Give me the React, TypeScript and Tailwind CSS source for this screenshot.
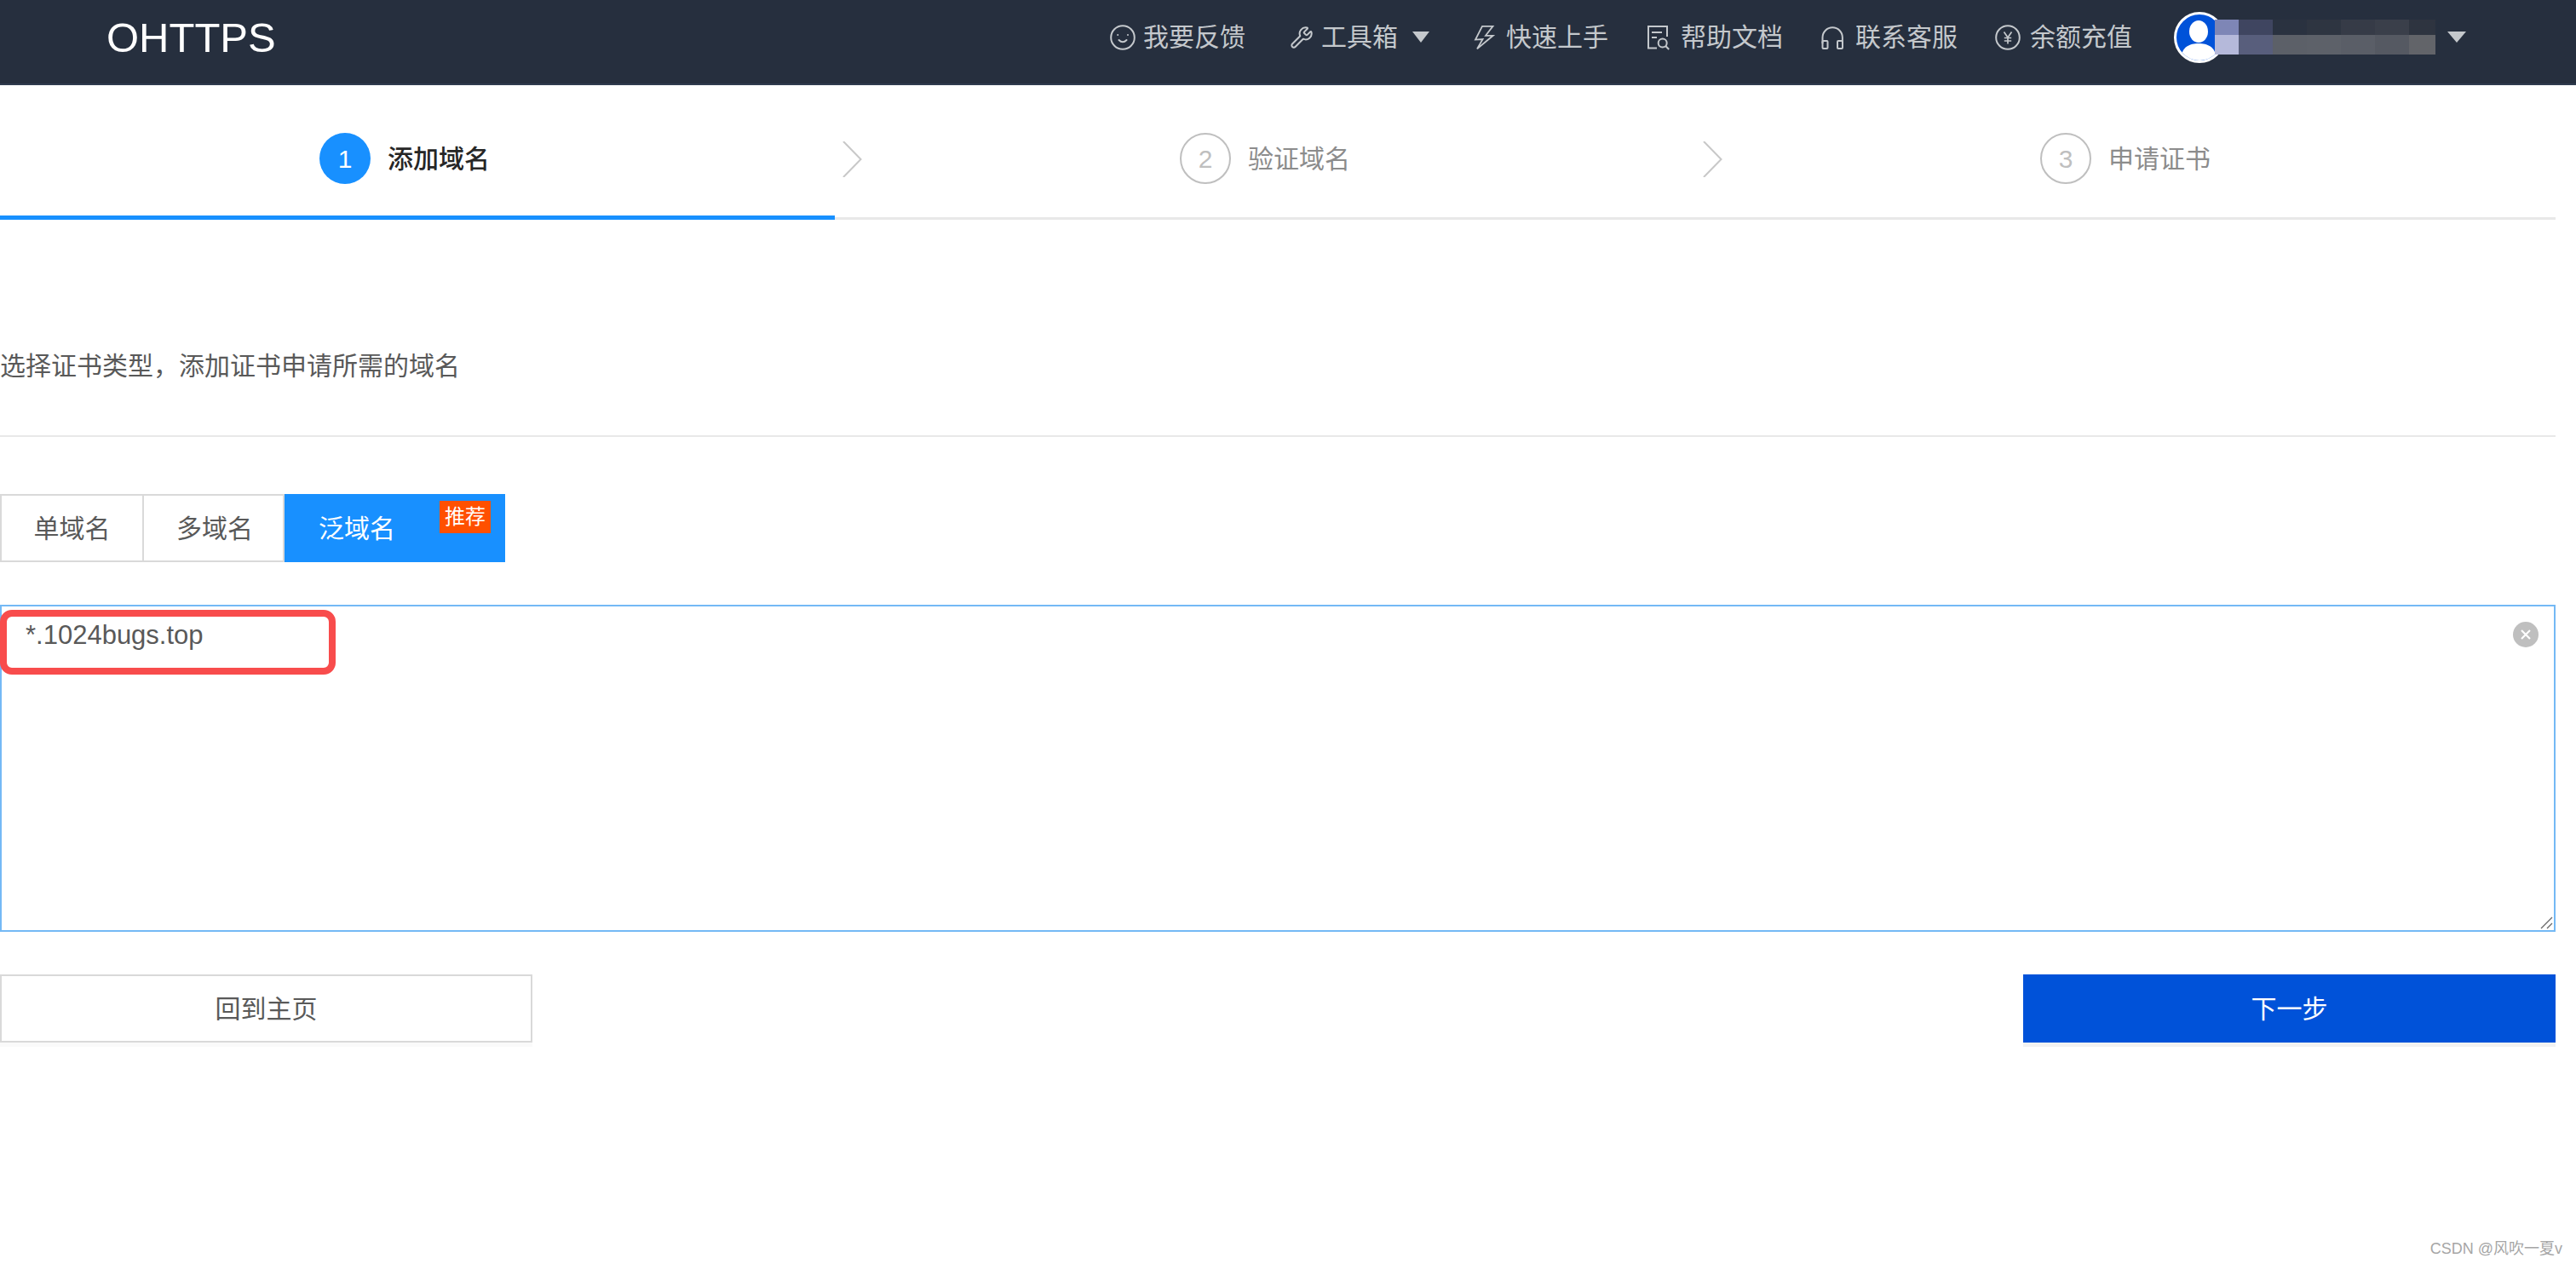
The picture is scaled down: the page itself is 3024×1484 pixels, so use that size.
import React from "react";
import { Wrench } from "lucide-react";

const ICON = "#c4c8cc";

function Smile() {
  return (
    <svg width="30" height="30" viewBox="0 0 30 30" fill="none" stroke={ICON} strokeWidth="2" strokeLinecap="round">
      <circle cx="15" cy="15" r="13.8" />
      <circle cx="9.2" cy="12" r="1" fill={ICON} stroke="none" />
      <circle cx="21" cy="12" r="1" fill={ICON} stroke="none" />
      <path d="M10.5 18q4.5 4.5 9 0" />
    </svg>
  );
}
function Bolt() {
  return (
    <svg width="30" height="30" viewBox="0 0 30 30" fill="none" stroke={ICON} strokeWidth="1.8" strokeLinejoin="miter">
      <path d="M25.5 1.8H13L5 17.6l8.6-.6L7 28.4 25.7 12.8H17z" />
    </svg>
  );
}
function DocSearch() {
  return (
    <svg width="30" height="30" viewBox="0 0 30 30" fill="none" stroke={ICON} strokeWidth="2">
      <path d="M25 14V2H3v25.5h10" />
      <path d="M7 9h12M7 15h6" />
      <circle cx="19.7" cy="21.5" r="5" />
      <path d="M23.5 25.3l3.7 3.7" />
    </svg>
  );
}
function Headset() {
  return (
    <svg width="30" height="30" viewBox="0 0 30 30" fill="none" stroke={ICON} strokeWidth="2">
      <path d="M2.5 22V15a11.7 11.7 0 0 1 23.4 0v7" />
      <rect x="2.5" y="19" width="6" height="9" rx="1" />
      <rect x="20" y="19" width="6" height="9" rx="1" />
    </svg>
  );
}
function Yen() {
  return (
    <svg width="30" height="30" viewBox="0 0 30 30" fill="none" stroke={ICON} strokeWidth="2">
      <circle cx="15" cy="15" r="13.8" />
      <path d="M10.5 8.5L15 15l4.5-6.5M15 15v7.5M10.8 15.5h8.4M10.8 19h8.4" strokeWidth="1.7" />
    </svg>
  );
}
function Caret({ width = 20 }: { width?: number }) {
  return (
    <svg width={width} height="13" viewBox="0 0 20 13" preserveAspectRatio="none" fill={ICON}>
      <path d="M0 0h20L10 13z" />
    </svg>
  );
}
function Chevron() {
  return (
    <svg width="23" height="42" viewBox="0 0 23 42" fill="none" stroke="#c8c8c8" strokeWidth="2">
      <path d="M1 0l20.5 21L1 42" />
    </svg>
  );
}

function NavItem({ icon, label, tight }: { icon: React.ReactNode; label: string; tight?: boolean }) {
  return (
    <div className={tight ? "flex items-center gap-[9px]" : "flex items-center gap-[11px]"}>
      {icon}
      <span>{label}</span>
    </div>
  );
}

function Step({ n, label, active }: { n: number; label: string; active?: boolean }) {
  return (
    <div
      className={
        active
          ? "flex-1 h-[158px] box-border border-b-[5px] border-[#1890ff] pt-[56px] pr-[30px] flex justify-center items-start"
          : "flex-1 h-[155px] pt-[56px] pr-[30px] flex justify-center items-start"
      }
    >
      <div className="flex items-center gap-[20px]">
        <div
          className={
            active
              ? "w-[60px] h-[60px] rounded-full bg-[#1890ff] text-white flex items-center justify-center text-[30px] font-['Liberation_Sans',sans-serif]"
              : "w-[60px] h-[60px] rounded-full border-2 border-[#bfbfbf] text-[#bfbfbf] flex items-center justify-center text-[30px] font-['Liberation_Sans',sans-serif]"
          }
        >
          {n}
        </div>
        <span className={active ? "pt-[1px] text-[30px] leading-[42px] font-medium text-[#262626]" : "pt-[1px] text-[30px] leading-[42px] text-[#8c8c8c]"}>
          {label}
        </span>
      </div>
    </div>
  );
}

export default function App() {
  return (
    <div className="relative h-[1484px] overflow-hidden bg-white font-['Liberation_Sans','Noto_Sans_CJK_SC',sans-serif] text-[#595959]">
      <header className="h-[100px] box-border bg-[#262f3e] border-b-2 border-[#2f3b4e] flex items-center justify-between pl-[125px] pr-[129px]">
        <div className="text-white text-[49px] leading-none -mt-[10px]">OHTTPS</div>
        <nav className="flex items-center gap-[44px] text-[30px] text-[#c4c8cc] -mt-[11px]">
          <div className="mr-[8px]">
            <NavItem tight icon={<Smile />} label="我要反馈" />
          </div>
          <div className="flex items-center mr-[5px]">
            <NavItem tight icon={<Wrench size={28} color={ICON} strokeWidth={1.7} />} label="工具箱" />
            <span className="ml-[17px]">
              <Caret />
            </span>
          </div>
          <NavItem icon={<Bolt />} label="快速上手" />
          <NavItem icon={<DocSearch />} label="帮助文档" />
          <NavItem icon={<Headset />} label="联系客服" />
          <NavItem icon={<Yen />} label="余额充值" />
          <div className="flex items-center ml-[5px]">
            <div className="w-[60px] h-[60px] rounded-full bg-[#0052d9] border-[3px] border-white overflow-hidden flex flex-col items-center">
              <svg width="54" height="54" viewBox="0 0 54 54" fill="white">
                <ellipse cx="26" cy="20" rx="11" ry="13" />
                <path d="M6 50c0-12 10-16 20-16s20 4 20 16c-5 3-13 4-20 4s-15-1-20-4z" />
              </svg>
            </div>
            <div className="relative -ml-[12px] grid grid-cols-[28px_40px_40px_40px_40px_40px_31px] grid-rows-[18px_23px]">
              <div className="bg-[#7e86b6]" />
              <div className="bg-[#3f4560]" />
              <div className="bg-[#2a3240]" />
              <div className="bg-[#2e3541]" />
              <div className="bg-[#363b47]" />
              <div className="bg-[#3a3f4a]" />
              <div className="bg-[#2e3440]" />
              <div className="bg-[#b5b9da]" />
              <div className="bg-[#585e7c]" />
              <div className="bg-[#5c6068]" />
              <div className="bg-[#5d6169]" />
              <div className="bg-[#5a5e67]" />
              <div className="bg-[#555962]" />
              <div className="bg-[#626469]" />
            </div>
            <span className="ml-[14px]">
              <Caret width={22} />
            </span>
          </div>
        </nav>
      </header>

      <main className="pr-[24px]">
        <div className="flex h-[158px] box-border border-b-[3px] border-[#e8e8e8]">
          <Step n={1} label="添加域名" active />
          <div className="w-[30px] pt-[66px] pl-[9px]">
            <Chevron />
          </div>
          <Step n={2} label="验证域名" />
          <div className="w-[30px] pt-[66px] pl-[9px]">
            <Chevron />
          </div>
          <Step n={3} label="申请证书" />
        </div>

        <p className="mt-[151px] text-[30px] leading-[42px]">选择证书类型，添加证书申请所需的域名</p>
        <div className="mt-[60px] h-[2px] bg-[#e8e8e8]" />

        <div className="mt-[67px] flex h-[80px] w-[593px] text-[30px]">
          <div className="w-[169px] box-border border-2 border-[#d9d9d9] flex items-center justify-center">单域名</div>
          <div className="w-[165px] box-border border-y-2 border-r-2 border-[#d9d9d9] pl-[3px] flex items-center justify-center">多域名</div>
          <div className="relative flex-1 bg-[#1890ff] text-white flex items-center pl-[40px]">
            泛域名
            <span className="absolute right-[17px] top-[8px] w-[60px] h-[38px] bg-[#ff5000] flex items-center justify-center text-[24px] leading-none">
              推荐
            </span>
          </div>
        </div>

        <div className="relative mt-[50px] h-[384px]">
          <textarea
            readOnly
            defaultValue="*.1024bugs.top"
            className="block w-full h-full box-border border-2 border-[#74b9f5] pt-[12px] pl-[28px] text-[31px] leading-[44px] text-[#595959] outline-none resize-none"
          />
          <div className="absolute left-0 top-[6px] w-[394px] h-[76px] box-border border-[8px] border-[#f84c4c] rounded-[14px] pointer-events-none" />
          <div className="absolute right-[20px] top-[20px] w-[30px] h-[30px] rounded-full bg-[#bfbfbf] flex items-center justify-center">
            <svg width="14" height="14" viewBox="0 0 14 14" stroke="white" strokeWidth="2.2">
              <path d="M2 2l10 10M12 2L2 12" />
            </svg>
          </div>
          <svg className="absolute right-[3px] bottom-[3px]" width="15" height="15" viewBox="0 0 15 15" stroke="#666" strokeWidth="1.3" fill="none">
            <path d="M1 14L14 1M8 14l6-6" />
          </svg>
        </div>

        <div className="mt-[50px] flex justify-between text-[30px]">
          <div className="w-[625px] h-[80px] box-border border-2 border-[#d9d9d9] flex items-center justify-center shadow-[0_5px_0_#fafafa]">
            回到主页
          </div>
          <div className="w-[625px] h-[80px] bg-[#0052d9] text-white flex items-center justify-center shadow-[0_5px_0_#f2f2f2]">
            下一步
          </div>
        </div>
      </main>

      <div className="absolute right-[16px] top-[1453px] text-[18px] leading-[26px] text-[#a6a6a6]">CSDN @风吹一夏v</div>
    </div>
  );
}
